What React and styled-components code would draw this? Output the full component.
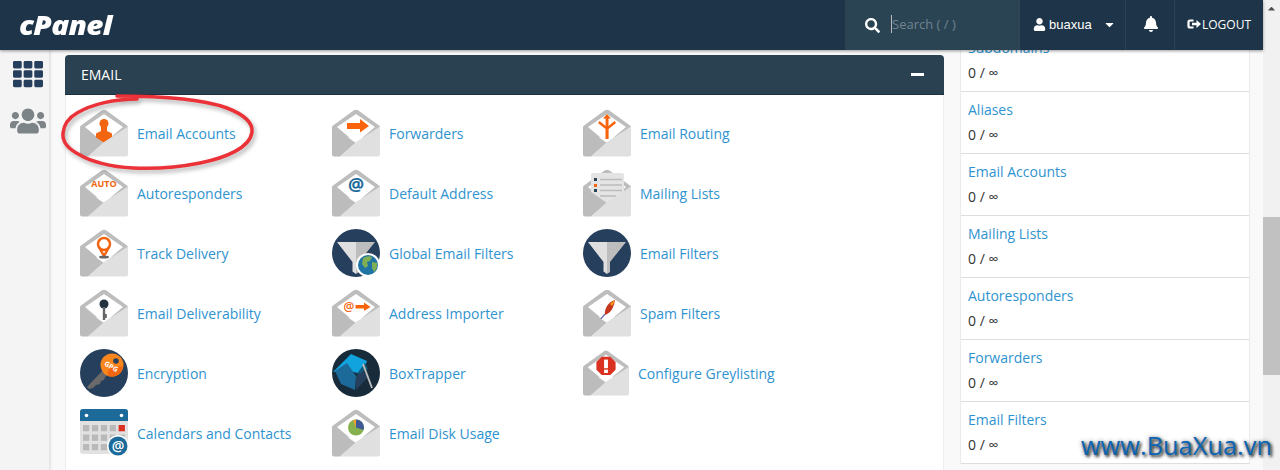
import React from "react";
import styled, { createGlobalStyle } from "styled-components";
import { FaSearch, FaUser, FaBell, FaTh, FaUsers, FaCaretDown, FaCaretUp } from "react-icons/fa";

const Global = createGlobalStyle`
  html, body { margin: 0; padding: 0; height: 470px; overflow: hidden; background: #fafafa; }
  * { box-sizing: border-box; }
  body { font-family: "Open Sans", "Liberation Sans", sans-serif; font-size: 14px; color: #333; }
`;

const Page = styled.div`
  position: relative; width: 1280px; height: 470px; display: flex; overflow: hidden;
`;
const Viewport = styled.div`
  width: 1263px; height: 470px; display: flex; flex-direction: column; background: #f9f9f9;
`;
const Scrollbar = styled.div`
  width: 17px; height: 470px; background: #f1f1f1; position: relative; display: flex; justify-content: center; color: #505050; font-size: 11px; padding-top: 3px;
`;
const Thumb = styled.div`
  position: absolute; left: 0; top: 217px; width: 17px; height: 158px; background: #c1c1c1;
`;
const Header = styled.header`
  position: relative; z-index: 3; flex: 0 0 50px; display: flex; align-items: stretch; background: #1e3549; color: #fff; box-shadow: 0 1px 3px rgba(0,0,0,.4);
`;
const Logo = styled.div`
  margin-left: 19px; align-self: center; font: italic 800 27px/1 "Open Sans", sans-serif; letter-spacing: -.6px; color: #fff; transform: scaleX(1.1); transform-origin: left; margin-top: -2px;
`;
const Spacer = styled.div`flex: 1;`;
const Search = styled.div`
  width: 175px; background: #2b4453; display: flex; align-items: center; padding-left: 20px; color: #fff; font-size: 15px; border-right: 1px solid #2e4657;
`;
const Placeholder = styled.span`
  margin-left: 11px; margin-top: -2px; border-left: 1px solid #bbb; font-size: 13px; color: #6f8391; line-height: 18px; white-space: nowrap;
`;
const HeadCell = styled.div`
  display: flex; align-items: center; width: ${p => p.$w}px; padding-left: ${p => p.$pl}px; padding-bottom: 2px; font-size: ${p => p.$fs || 12}px; border-right: ${p => (p.$sep ? "1px solid #2c4356" : "none")}; color: #fff; white-space: nowrap; font-family: ${p => p.$sans ? '"Liberation Sans", sans-serif' : "inherit"};
`;
const Caret = styled.span`margin-left: 11px; display: flex; font-size: 13px;`;
const Body = styled.div`
  flex: 1; display: flex; min-height: 0; overflow: hidden;
`;
const Sidebar = styled.nav`
  flex: 0 0 50px; background: #f4f4f4; border-right: 1px solid #e4e4e4; box-shadow: 1px 0 2px rgba(0,0,0,.08); display: flex; flex-direction: column; align-items: center; color: #34495c; padding: 9px 0 0 6px; gap: 14px;
`;
const SideIcon = styled.span`
  display: flex; font-size: ${p => p.$s}px; color: ${p => p.$c};
`;
const Main = styled.main`
  flex: 0 0 910px; padding: 5px 16px 0 15px;
`;
const Panel = styled.section`
  width: 879px; height: 420px; background: #fff; border: 1px solid #eee; border-top: 0; border-radius: 4px 4px 0 0;
`;
const PanelHead = styled.div`
  height: 40px; margin: 0 -1px; background: #2a4151; border-bottom: 1px solid #1e3040; border-radius: 4px 4px 0 0; color: #fff; font-size: 14px; display: flex; align-items: center; justify-content: space-between; padding: 0 20px 0 16px;
`;
const Minus = styled.span`width: 13px; height: 3px; background: #fff; display: block;`;
const Grid = styled.div`
  display: grid; grid-template-columns: 252px 251px 251px; grid-auto-rows: 60px; padding: 14px 0 0 14px;
`;
const Item = styled.a`
  display: flex; align-items: center; gap: 9px; height: 48px; color: #2f93cf; font-size: 14px; white-space: nowrap;
`;
const Stats = styled.aside`
  width: 290px; margin-top: -20px; background: #fff; border-left: 1px solid #eaeaea; border-right: 1px solid #eaeaea; align-self: flex-start;
`;
const StatRow = styled.div`
  height: 62px; padding: 7px 7px 0; border-bottom: 1px solid #dedede; display: flex; flex-direction: column; gap: 4px; font-size: 14px; line-height: 21px;
`;
const StatName = styled.a`color: #2f93cf;`;
const StatVal = styled.span`color: #333;`;
const Ring = styled.svg`
  position: absolute; left: 60px; top: 90px; z-index: 2; pointer-events: none; overflow: visible;
`;
const Watermark = styled.div`
  position: absolute; right: 8px; top: 428px; z-index: 4; font: 400 25.400px/34px "Open Sans", sans-serif; color: #0b64b4; text-shadow: 2px 2px 3px #333, 0 0 4px rgba(0,0,0,.45);
`;

const Env = ({ children, s = 48 }) => (
  <svg width={s} height={s} viewBox="0 0 48 48" style={{ flex: "none" }}>
    <path d="M1 16.500 22 1.300q2-1.300 4 0l21 15.200q1 .8 1 2v10H0v-10q0-1.200 1-2z" fill="#bdbdbd" />
    <path d="M5 18 24 5l19 13-19 16z" fill="#fff" />
    {children}
    <path d="M0 17.500 24 34 8 47.500H2q-2 0-2-2z" fill="#bcbcbc" />
    <path d="M48 17.500V45.500q0 2-2 2H8L24 33z" fill="#e0e0e0" />
  </svg>
);
const Circle = ({ fill, children }) => (
  <svg width="48" height="48" viewBox="0 0 48 48" style={{ flex: "none" }}>
    <circle cx="24" cy="24" r="24" fill={fill} />
    {children}
  </svg>
);
const Funnel = () => (
  <>
    <path d="M5 13H24V45L20.500 42.500V33z" fill="#dfdfdf" />
    <path d="M43 13H24V45L27 43V33z" fill="#bdbdbd" />
  </>
);
const Globe = () => (
  <>
    <circle cx="36" cy="36" r="12" fill="#fff" />
    <circle cx="36" cy="36" r="10" fill="#1f74a3" />
    <path d="M31 29q5-3 9-1l-2 4-3 1 1 4-3 2-3-4zM40 33l5 1q1 5-3 9l-2-4z" fill="#7fae55" />
  </>
);

const items = [
  ["Email Accounts", <Env><circle cx="24" cy="14.500" r="4.500" fill="#f26511" /><path d="M21 18h6v4l5 2.500V29L24 34 16 29V24.500l5-2.500z" fill="#f26511" /></Env>],
  ["Forwarders", <Env><path d="M15 14H28V10L37 17 28 23.500V20H15z" fill="#f9630b" /></Env>],
  ["Email Routing", <Env><path d="M22.500 30V20L15 14l1.600-2 6 5V9.500H20L24 5l4 4.500h-2.500V17l6-5 1.600 2-7.500 6v10z" fill="#f9630b" /></Env>],
  ["Autoresponders", <Env><text x="24" y="18" textAnchor="middle" fontFamily="Open Sans" fontWeight="700" fontSize="9" fill="#f26511">AUTO</text></Env>],
  ["Default Address", <Env><text x="24" y="21.500" textAnchor="middle" fontFamily="Open Sans" fontWeight="700" fontSize="18" fill="#1c6a99">@</text></Env>],
  ["Mailing Lists", <Env><rect x="8" y="4" width="33" height="31" rx="2" fill="#e4e4e4" /><rect x="11" y="9" width="3" height="3" fill="#2a4151" /><rect x="11" y="15" width="3" height="3" fill="#f26511" /><rect x="11" y="20" width="3" height="3" fill="#2a4151" /><path d="M17 10.500h22M17 16h22M17 21.500h22M17 27h16" stroke="#bbb" strokeWidth="1.600" /></Env>],
  ["Track Delivery", <Env><circle cx="24" cy="15" r="6" fill="none" stroke="#f26511" strokeWidth="2.500" /><path d="M19.500 19 24 27l4.500-8" fill="none" stroke="#f26511" strokeWidth="2.500" /><ellipse cx="24" cy="28" rx="5" ry="1.500" fill="#666" /></Env>],
  ["Global Email Filters", <Circle fill="#263f5c"><Funnel /><Globe /></Circle>],
  ["Email Filters", <Circle fill="#263f5c"><Funnel /></Circle>],
  ["Email Deliverability", <Env><circle cx="24" cy="15" r="4.500" fill="#22333f" /><rect x="22.800" y="18" width="2.400" height="13" fill="#666" /><rect x="25" y="25" width="1.800" height="4" fill="#666" /></Env>],
  ["Address Importer", <Env><text x="17" y="22" textAnchor="middle" fontFamily="Open Sans" fontWeight="600" fontSize="12" fill="#f26511">@</text><path d="M23.500 16H32V13.500L38.500 18 32 22V19.500H23.500z" fill="#f9630b" /></Env>],
  ["Spam Filters", <Env><path d="M22 26c-1-6 3-13 10-15-1 7-4 13-10 15z" fill="#c5361e" /><path d="M27 15c1.500-2 3-3 5-4-.5 2-1.500 4-3 6z" fill="#f7941d" /><path d="M16 32l6-7" stroke="#6d6aa8" strokeWidth="1.200" /></Env>],
  ["Encryption", <Circle fill="#263f5c"><path d="M7 38 24 20l5 5-4 3-1 3-3 1-1 3-4 1-3 3-4 1z" fill="#6a6a6a" /><circle cx="32" cy="16" r="11.500" fill="#f7861c" /><path d="M32 16 A11.500 11.500 0 0 0 28 27 A11.500 11.500 0 0 0 43 18z" fill="#f2660f" /><circle cx="36" cy="12" r="2.800" fill="#263f5c" /><text x="31" y="20" textAnchor="middle" fontFamily="Open Sans" fontWeight="700" fontSize="7" fill="#fff" transform="rotate(30 31 18)">GPG</text></Circle>],
  ["BoxTrapper", <Circle fill="#182b3a"><path d="M19 5 35 12 30 25 13 21 1 23z" fill="#11a3dd" /><path d="M3 22 15 14 24 27 23 41 9 35z" fill="#1c6a99" /><path d="M24 27 31 22 36 28 24 41z" fill="#263f5c" /><path d="M24 26 36 20 33 14z" fill="#0f5878" /><path d="M31 15 40 39" stroke="#bbb" strokeWidth="2" /></Circle>],
  ["Configure Greylisting", <Env s={46}><path d="M19.500 7h9l5.500 5.500v8L28.500 26h-9L14 20.500v-8z" fill="#db3121" /><rect x="22" y="10" width="4" height="9" fill="#fff" /><rect x="22" y="20.500" width="4" height="3.500" fill="#fff" /></Env>],
  ["Calendars and Contacts", <svg width="48" height="48" viewBox="0 0 48 48" style={{ flex: "none" }}>
    <rect y="0" width="48" height="45" rx="3" fill="#e1e1e1" /><path d="M0 12V3q0-3 3-3h42q3 0 3 3v9z" fill="#1c6a99" />
    <circle cx="6.500" cy="6.500" r="1.800" fill="#fff" /><circle cx="41.500" cy="6.500" r="1.800" fill="#fff" />
    {[0, 1, 2].flatMap(r => [0, 1, 2, 3, 4].map(c => <rect key={r + "-" + c} x={3 + c * 8.900} y={16 + r * 9.500} width="6.300" height="6.300" fill={r === 0 && c === 4 ? "#db3121" : "#b9b9b9"} />))}
    <circle cx="38" cy="37" r="11" fill="#fff" /><circle cx="38" cy="37" r="9.500" fill="#1c6a99" />
    <text x="38" y="42" textAnchor="middle" fontFamily="Open Sans" fontWeight="600" fontSize="14" fill="#fff">@</text>
  </svg>],
  ["Email Disk Usage", <Env><circle cx="24" cy="18.500" r="8" fill="#87b04f" /><path d="M24 18.500V10.500a8 8 0 0 1 7.500 10.500z" fill="#3f5a96" /><path d="M24 18.500V10.500a8 8 0 0 0-3 .6z" fill="#f0a030" /></Env>],
];

const stats = ["Subdomains", "Aliases", "Email Accounts", "Mailing Lists", "Autoresponders", "Forwarders", "Email Filters"];

export default function App() {
  return (
    <Page>
      <Global />
      <Viewport>
        <Header>
          <Logo>cPanel</Logo>
          <Spacer />
          <Search><FaSearch /><Placeholder>Search ( / )</Placeholder></Search>
          <HeadCell $w={106} $pl={13} $sep $sans $fs={13}>
            <FaUser size={13} style={{ marginRight: 3 }} />buaxua<Caret><FaCaretDown /></Caret>
          </HeadCell>
          <HeadCell $w={49} $pl={17} $sep><FaBell size={16} /></HeadCell>
          <HeadCell $w={88} $pl={11}>
            <svg width="15" height="12" viewBox="0 0 15 12" style={{ marginRight: 1 }}>
              <path d="M7.500 2.500H4q-1.500 0-1.500 1.500v4q0 1.500 1.500 1.500h3.500" fill="none" stroke="#fff" strokeWidth="2.200" />
              <path d="M6 4.700h4.500V2L15 6l-4.500 4V7.300H6z" fill="#fff" />
            </svg>
            LOGOUT
          </HeadCell>
        </Header>
        <Body>
          <Sidebar>
            <SideIcon $s={30} $c="#263f5c"><FaTh /></SideIcon>
            <SideIcon $s={36} $c="#7d8488"><FaUsers /></SideIcon>
          </Sidebar>
          <Main>
            <Panel>
              <PanelHead>EMAIL<Minus /></PanelHead>
              <Grid>
                {items.map(([label, icon]) => (
                  <Item key={label}>{icon}{label}</Item>
                ))}
              </Grid>
            </Panel>
          </Main>
          <Stats>
            {stats.map(s => (
              <StatRow key={s}><StatName>{s}</StatName><StatVal>0 / ∞</StatVal></StatRow>
            ))}
          </Stats>
        </Body>
      </Viewport>
      <Scrollbar><FaCaretUp /><Thumb /></Scrollbar>
      <Ring width="200" height="80" viewBox="60 90 200 80" style={{ filter: "drop-shadow(2px 3px 2px rgba(0,0,0,.3))" }}>
        <path d="M117 96C170 96 205 100 227 108C245 115 253 123 252 132C250 148 225 158 200 163C180 167 155 169 133 168C110 167 90 161 80 155C68 149 62 142 63 133C64 124 70 117 77 113C92 104 115 99 137 99" fill="none" stroke="#ea3238" strokeWidth="3.500" strokeLinecap="round" />
      </Ring>
      <Watermark>www.BuaXua.vn</Watermark>
    </Page>
  );
}
